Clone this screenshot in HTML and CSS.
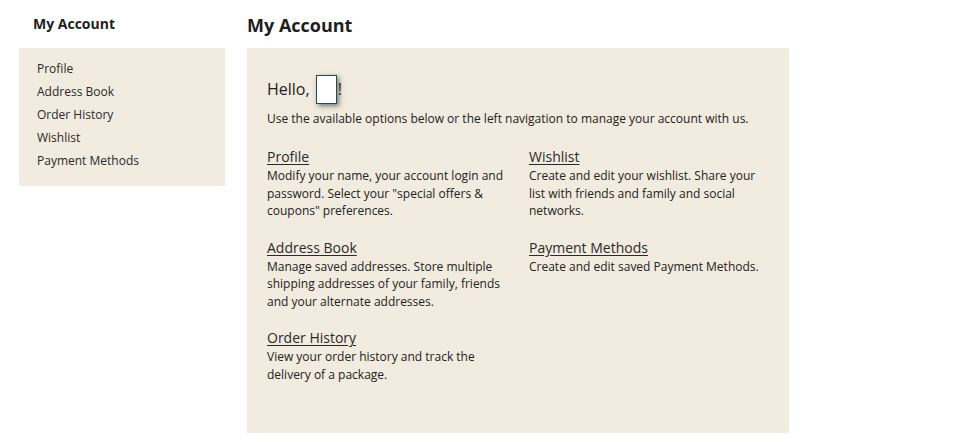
FILE: index.html
```html
<!DOCTYPE html>
<html>
<head>
<meta charset="utf-8">
<link rel="stylesheet" href="styles.css">
</head>
<body>
<div class="page">
  <aside class="sidebar">
    <h2 class="side-title">My Account</h2>
    <nav class="side-nav">
      <a href="#">Profile</a>
      <a href="#">Address Book</a>
      <a href="#">Order History</a>
      <a href="#">Wishlist</a>
      <a href="#">Payment Methods</a>
    </nav>
  </aside>
  <main class="main">
    <h1 class="main-title">My Account</h1>
    <section class="panel">
      <div class="hello"><span>Hello,</span><span class="name-box"></span><span>!</span></div>
      <p class="intro">Use the available options below or the left navigation to manage your account with us.</p>
      <div class="grid">
        <div class="col">
          <div class="item">
            <a href="#" class="item-title">Profile</a>
            <p>Modify your name, your account login and password. Select your "special offers &amp; coupons" preferences.</p>
          </div>
          <div class="item">
            <a href="#" class="item-title">Address Book</a>
            <p>Manage saved addresses. Store multiple shipping addresses of your family, friends and your alternate addresses.</p>
          </div>
          <div class="item">
            <a href="#" class="item-title">Order History</a>
            <p>View your order history and track the delivery of a package.</p>
          </div>
        </div>
        <div class="col">
          <div class="item">
            <a href="#" class="item-title">Wishlist</a>
            <p>Create and edit your wishlist. Share your list with friends and family and social networks.</p>
          </div>
          <div class="item">
            <a href="#" class="item-title">Payment Methods</a>
            <p>Create and edit saved Payment Methods.</p>
          </div>
        </div>
      </div>
    </section>
  </main>
</div>
</body>
</html>
```
FILE: styles.css
```css
* { box-sizing: border-box; }
body {
  margin: 0;
  font-family: "Open Sans", "Noto Sans", sans-serif;
  color: #222;
  background: #fff;
}
.page {
  display: flex;
  gap: 22px;
  padding: 0 0 0 19px;
}
.sidebar { width: 206px; flex: none; }
.side-title {
  margin: 0;
  height: 48px;
  padding: 14px 0 0 14px;
  font-size: 14px;
  font-weight: 700;
  line-height: 20px;
  color: #1e1e1e;
}
.side-nav {
  background: #f2ebdf;
  display: flex;
  flex-direction: column;
  padding: 9px 18px 14px;
}
.side-nav a {
  color: #2a2a2a;
  text-decoration: none;
  font-size: 12px;
  line-height: 23px;
}
.main { width: 542px; flex: none; }
.main-title {
  margin: 0;
  height: 48px;
  padding: 12px 0 0;
  font-size: 18px;
  font-weight: 700;
  line-height: 26px;
  color: #1e1e1e;
}
.panel {
  background: #f2ebdf;
  height: 385px;
  padding: 27px 20px 0;
}
.hello {
  font-size: 16px;
  line-height: 29px;
  color: #222;
  display: flex;
  align-items: center;
}
.name-box {
  display: inline-block;
  width: 21px;
  height: 29px;
  margin: 0 1px 0 6px;
  background: #fff;
  border: 1px solid #1e4f4f;
  box-shadow: 2px 2px 5px rgba(0,0,0,0.5);
}
.intro {
  margin: 6px 0 0;
  font-size: 12px;
  line-height: 18px;
  color: #222;
}
.grid {
  display: grid;
  grid-template-columns: 240px 240px;
  column-gap: 22px;
  margin-top: 20px;
}
.item { margin-bottom: 19px; }
.item-title {
  display: block;
  width: max-content;
  color: #2a2a2a;
  font-size: 14px;
  line-height: 18px;
  text-decoration: underline;
  text-underline-offset: 2px;
}
.item p {
  margin: 1px 0 0;
  font-size: 12px;
  line-height: 17.5px;
  color: #222;
}
```
